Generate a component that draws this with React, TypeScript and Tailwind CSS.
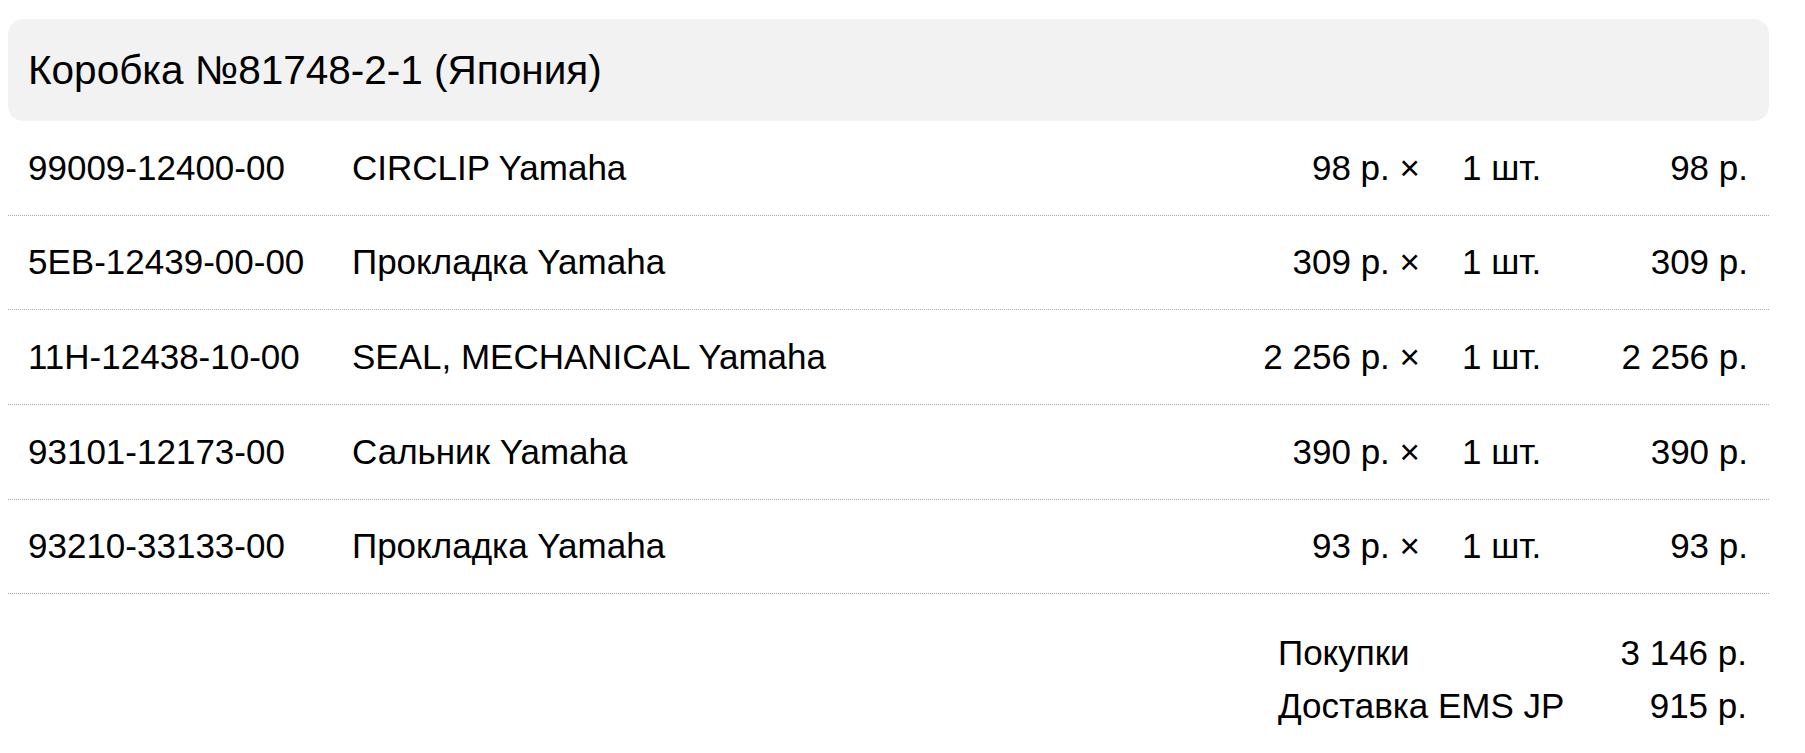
import React from "react";

const items = [
  { code: "99009-12400-00", name: "CIRCLIP Yamaha", price: "98 р.", qty: "1 шт.", total: "98 р." },
  { code: "5EB-12439-00-00", name: "Прокладка Yamaha", price: "309 р.", qty: "1 шт.", total: "309 р." },
  { code: "11H-12438-10-00", name: "SEAL, MECHANICAL Yamaha", price: "2 256 р.", qty: "1 шт.", total: "2 256 р." },
  { code: "93101-12173-00", name: "Сальник Yamaha", price: "390 р.", qty: "1 шт.", total: "390 р." },
  { code: "93210-33133-00", name: "Прокладка Yamaha", price: "93 р.", qty: "1 шт.", total: "93 р." },
];

const App = () => {
  return (
    <div className="min-h-screen bg-white text-black font-['Liberation_Sans',Arial,sans-serif]">
      <div className="ml-[8px] w-[1761px] pt-[19px]">
        {/* Box header */}
        <div className="flex h-[102px] items-center rounded-[15px] bg-[#f2f2f2] px-5">
          <h2 className="text-[40.5px] leading-none">Коробка №81748-2-1 (Япония)</h2>
        </div>

        {/* Items */}
        <div>
          {items.map((item) => (
            <div
              key={item.code}
              className="flex h-[94.7px] items-center border-b border-dotted border-[#a8a8a8] pl-5 pr-[21px] text-[35px]"
            >
              <div className="w-[324px]">{item.code}</div>
              <div className="flex-1">{item.name}</div>
              <div className="text-right">{item.price} ×</div>
              <div className="ml-[42px] w-[130px]">{item.qty}</div>
              <div className="w-[156px] text-right">{item.total}</div>
            </div>
          ))}
        </div>

        {/* Totals */}
        <div className="mt-[32px] ml-auto grid w-[491px] grid-cols-[1fr_auto] pr-[22px] text-[35px] leading-[53px]">
          <div>Покупки</div>
          <div className="text-right">3 146 р.</div>
          <div>Доставка EMS JP</div>
          <div className="text-right">915 р.</div>
        </div>
      </div>
    </div>
  );
};

export default App;
